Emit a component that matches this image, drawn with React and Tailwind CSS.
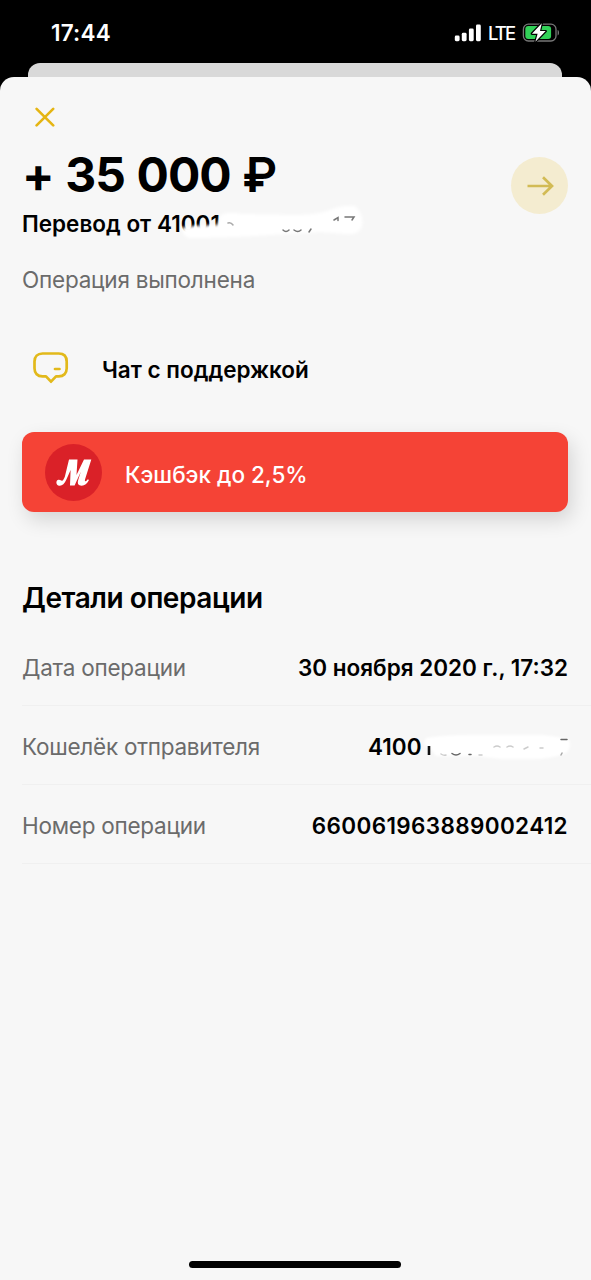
const details = [
    { id: "date", label: "Дата операции", value: "30 ноября 2020 г., 17:32" },
    { id: "wallet", label: "Кошелёк отправителя", value: "4100", masked: true },
    { id: "number", label: "Номер операции", value: "660061963889002412", wide: true },
];

function StatusBar() {
    return (
        <div className="h-[63px] flex items-center justify-between pl-[51px] pr-[31px] pt-[3px] text-white">
            <span className="text-[22.5px] leading-8 font-semibold tracking-[0.2px]">17:44</span>
            <div className="flex items-center">
                <svg width="27" height="18" viewBox="0 0 27 18" fill="currentColor">
                    <rect x="0.8" y="11.6" width="4.8" height="5.6" rx="1.4" />
                    <rect x="7.8" y="8.8" width="4.8" height="8.4" rx="1.4" />
                    <rect x="14.9" y="4.6" width="4.8" height="12.6" rx="1.4" />
                    <rect x="22" y="0.6" width="4.8" height="16.6" rx="1.4" />
                </svg>
                <span className="ml-[7px] w-[27px] text-[18.5px] leading-8 font-medium tracking-[-1.9px] whitespace-nowrap">LTE</span>
                <svg className="ml-[7px]" width="38" height="20" viewBox="0 0 38 20">
                    <rect x="1.4" y="1.2" width="32.6" height="16.8" rx="5" fill="none" stroke="#777" strokeWidth="1.3" />
                    <path d="M35.6 7c1.9.5 1.9 4.9 0 5.4z" fill="#777" />
                    <rect x="3.3" y="3.1" width="25.8" height="13" rx="3" fill="#32d158" />
                    <path
                        d="M19.8 0.3 9.9 10.7h5.7l-2.2 8 10.3-10.6h-5.7z"
                        fill="#fff"
                        stroke="#000"
                        strokeWidth="2.4"
                        strokeLinejoin="round"
                        paintOrder="stroke"
                    />
                </svg>
            </div>
        </div>
    );
}

// white brush over the sender's number in the header
function HeaderMask() {
    return (
        <svg className="absolute left-[153px] top-[-8px]" width="202" height="46" viewBox="0 0 202 46">
            <defs>
                <filter id="soft-a" x="-10%" y="-40%" width="120%" height="180%">
                    <feGaussianBlur stdDeviation="1.4" />
                </filter>
            </defs>
            <path
                d="M8 27Q24 25 42 25L46 15Q54 11 66 14L120 15Q140 15 152 11Q166 5 180 6Q189 14 187 26Q184 36 170 34L146 32Q110 34 80 36Q40 38 14 38Q5 34 8 27z"
                fill="#fff"
                filter="url(#soft-a)"
            />
            <g fill="none" stroke="#777" strokeWidth="1.5" strokeLinecap="round">
                <path d="M53 23q3-1 5 2" stroke="#aaa" />
                <path d="M108 30q3 3 6 0M119 30q4 3 7 0M136 29l-2 3" />
                <path d="M159 20l4-2.500v3M170 17h9l-2 3" />
            </g>
        </svg>
    );
}

// same brush for the wallet row
function WalletMask() {
    return (
        <svg className="absolute right-[-6px] top-0" width="162" height="36" viewBox="0 0 162 36">
            <defs>
                <filter id="soft-b" x="-10%" y="-40%" width="120%" height="180%">
                    <feGaussianBlur stdDeviation="1.2" />
                </filter>
            </defs>
            <path
                d="M14 7Q30 4 60 4H130Q150 6 157 9Q160 17 154 22Q140 28 120 28H90Q78 27 66 25H24L19 18Q14 16 12 12z"
                fill="#fff"
                filter="url(#soft-b)"
            />
            <path d="M17 15v9" stroke="#111" strokeWidth="2.6" />
            <g fill="none" stroke="#666" strokeWidth="1.5" strokeLinecap="round">
                <path d="M29 23q3 2 5 1M67 24h3" stroke="#ccc" />
                <path d="M40 22.500q4 3 8 0M57 23.500h2" />
                <path d="M82 16q3-2 6 0M95 16q3-2 6 0M112 18l4-2M128 17h3" stroke="#ccc" />
                <path d="M149 8.500h6" />
                <path d="M149 24l1-2" stroke="#aaa" />
            </g>
        </svg>
    );
}

function DetailRow({ item }) {
    return (
        <div className="h-[79px] flex items-center justify-between pr-[23px] pt-[3px] border-b border-[#f0f0f0] text-[22.5px] leading-8 whitespace-nowrap">
            <span className="text-[#6b6b6b] tracking-[-0.25px]">{item.label}</span>
            {item.masked ? (
                <div className="relative w-[200px] font-semibold">
                    {item.value}
                    <WalletMask />
                </div>
            ) : (
                <span className={item.wide ? "font-semibold tracking-[0.35px]" : "font-semibold"}>{item.value}</span>
            )}
        </div>
    );
}

export default function App() {
    return (
        <div className="w-[591px] h-[1280px] flex flex-col overflow-hidden bg-black text-black font-['Inter','Liberation_Sans',sans-serif]">
            <StatusBar />
            <div className="ml-7 mr-[29px] h-[26px] shrink-0 rounded-t-[12px] bg-[#d9d9d9]" />
            <main className="-mt-3 flex-1 flex flex-col rounded-t-[14px] bg-[#f7f7f7] pl-[22px]">
                <button className="mt-[30px] ml-[13px] size-5" aria-label="Закрыть">
                    <svg width="20" height="20" viewBox="0 0 20 20" stroke="#e5b513" strokeWidth="2.6" strokeLinecap="round">
                        <path d="M1.6 1.8l16.6 16.6M18.2 1.8L1.6 18.4" />
                    </svg>
                </button>

                <section className="mt-[18px] flex justify-between pr-[23px]">
                    <div>
                        <h1 className="h-[60px] text-[48px] leading-[60px] font-bold tracking-[-1px] [word-spacing:1.3px] whitespace-nowrap">
                            + 35 000 <span className="font-semibold">₽</span>
                        </h1>
                        <div className="relative mt-[3px] text-[22.5px] leading-8 font-semibold whitespace-nowrap">
                            Перевод от 41001
                            <HeaderMask />
                        </div>
                        <p className="mt-6 text-[22.5px] leading-8 tracking-[-0.22px] text-[#6b6b6b]">Операция выполнена</p>
                    </div>
                    <button className="mt-3 size-[57px] rounded-full bg-[#f4ecd0] flex items-center justify-center" aria-label="Далее">
                        <svg width="28" height="22" viewBox="0 0 28 22" fill="none" stroke="#d2bb55" strokeWidth="2.7">
                            <path d="M1.5 11H26M17 2.2L26 11l-9 8.8" />
                        </svg>
                    </button>
                </section>

                <div className="mt-[54px] flex items-center h-[40px]">
                    <svg className="ml-[11px] mb-1" width="36" height="34" viewBox="0 0 36 34" fill="none" stroke="#e2b91b" strokeWidth="2.7" strokeLinecap="round" strokeLinejoin="round">
                        <path d="M9.5 2.5h16.2c5.2 0 8 3 8 8v6.8c0 5-3 8-8 8H23l-5 5.400-5-5.400H9.500c-5 0-8-3-8-8v-6.800c0-5 3-8 8-8z" />
                        <path d="M22 18h4.500" />
                    </svg>
                    <span className="ml-[33px] text-[22.5px] leading-8 font-semibold">Чат с поддержкой</span>
                </div>

                <div className="mt-[42px] mr-[23px] h-20 shrink-0 rounded-xl bg-[#f54336] flex items-center pl-[23px] text-white shadow-[4px_8px_20px_rgba(0,0,0,0.14)]">
                    <svg className="shrink-0" width="57" height="57" viewBox="0 0 57 57">
                        <circle cx="28.5" cy="28.5" r="28.5" fill="#da2128" />
                        <path
                            d="M24 15.500H32.500L31.500 31 39 15.500H46.300L40 35.500c-.5 2 .6 2.400 1.800 1l1-1.200 1.200.8c-2 3.800-4.200 5.700-7.300 5.700-3.400 0-4.600-2.200-3.500-5.700l2.600-8.400-6.200 13.800h-4.600l.6-15.500-4.200 9.600c-2 4.500-4.400 6.500-7 6.200-3.800-.4-3.900-5.600-.8-6 2-.2 2.500 1.200 3.600.9 1-.3 1.900-2.200 2.700-4.300z"
                            fill="#fff"
                        />
                    </svg>
                    <span className="ml-[23px] mt-[6px] text-[22.5px] leading-8 font-medium">Кэшбэк до 2,5%</span>
                </div>

                <section className="mt-[66px]">
                    <h2 className="h-[49px] text-[28px] leading-10 font-semibold tracking-[-0.45px]">Детали операции</h2>
                    {details.map((item) => (
                        <DetailRow key={item.id} item={item} />
                    ))}
                </section>

                <div className="mt-auto mb-[12px] ml-[167px] h-[7px] w-[212px] shrink-0 rounded-full bg-black" />
            </main>
        </div>
    );
}
